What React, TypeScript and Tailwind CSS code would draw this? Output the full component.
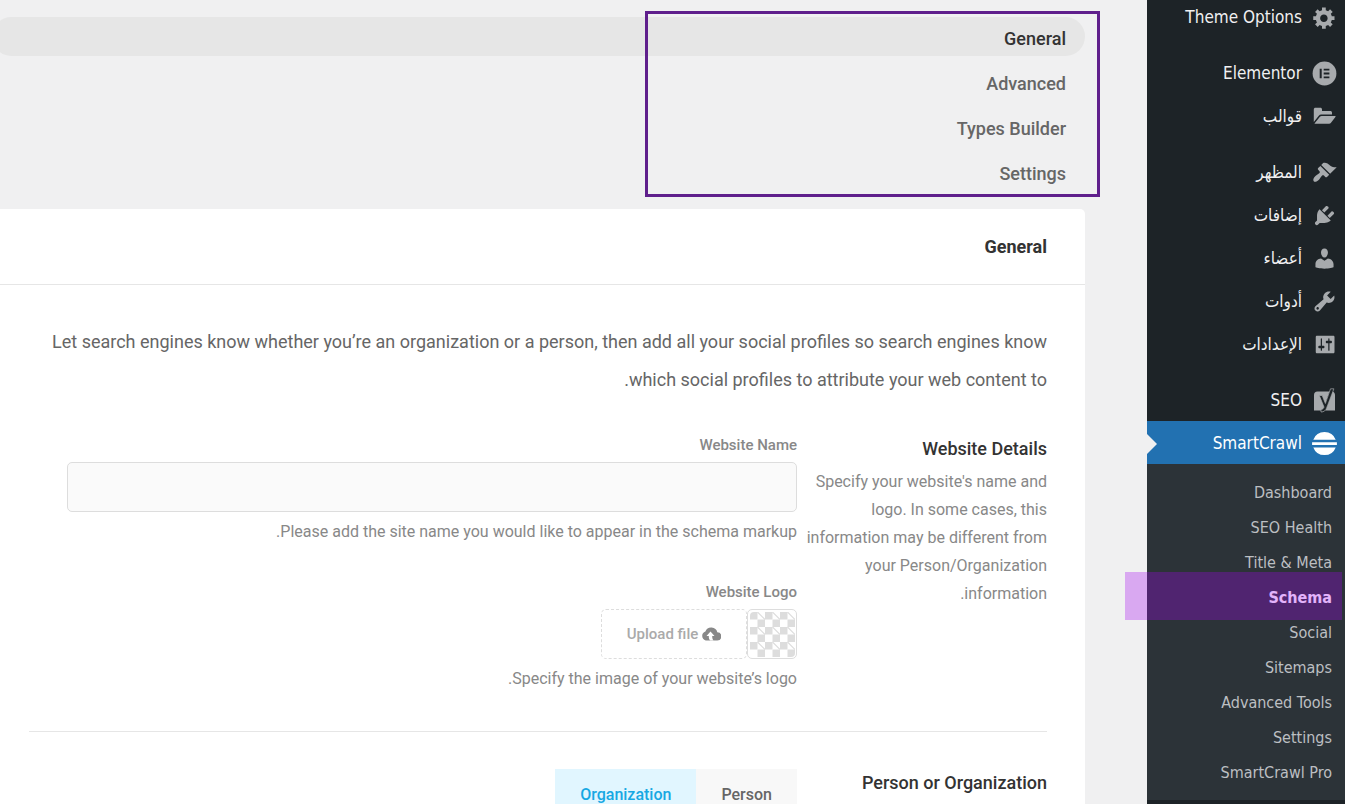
import { useState } from "react";
import type { ReactNode } from "react";

interface DashIconProps {
  d: string;
}

function DashIcon({ d }: DashIconProps) {
  return (
    <svg className="h-[25px] w-[25px]" viewBox="0 0 20 20" fill="currentColor" aria-hidden="true">
      <path d={d} />
    </svg>
  );
}

function ElementorIcon() {
  return (
    <svg className="h-[25px] w-[25px]" viewBox="0 0 25 25" aria-hidden="true">
      <circle cx="12.500" cy="12.500" r="11.900" fill="currentColor" />
      <path d="M7.700 7.700h2v9.600h-2zM11.700 7.700h5.700v1.900h-5.700zM11.700 11.500h5.700v1.900h-5.700zM11.700 15.400h5.700v1.900h-5.700z" fill="#1d2327" />
    </svg>
  );
}

function FolderIcon() {
  return (
    <svg className="h-[25px] w-[25px]" viewBox="0 0 25 25" fill="currentColor" aria-hidden="true">
      <path d="M1.800 18V5.400c0-1 .7-1.700 1.700-1.700h4.800c1 0 1.700.7 1.700 1.700v1.700h8.300c1 0 1.700.7 1.700 1.700v1.800H9.200c-1 0-1.800.4-2.400 1.100z" />
      <path d="M2.500 19.600l5.400-6.800c.5-.6 1-.9 1.800-.9h13.200c.6 0 .9.5.5 1l-4.600 6.100c-.4.5-1 .8-1.700.8H3.200c-.3 0-.5 0-.7-.2z" />
    </svg>
  );
}

function YoastIcon() {
  return (
    <svg className="h-[25px] w-[25px]" viewBox="0 0 25 25" aria-hidden="true">
      <path d="M5.500 3.500h12L11 22.500H2V7a3.500 3.500 0 0 1 3.500-3.500zM20.500 3.500c1.500.6 2.500 1.900 2.500 3.500v15.500h-9.500z" fill="currentColor" />
      <path d="M18.500.8h3.400L14.600 20c-1 2.600-2.500 4-5.600 4v-2.500c1.700-.2 2.600-1 3-2.400L7.300 7.500h2.900l3.200 8z" fill="#1d2327" stroke="currentColor" strokeWidth=".7" />
    </svg>
  );
}

function SmartCrawlIcon() {
  return (
    <svg className="h-[25px] w-[25px]" viewBox="0 0 25 25" fill="currentColor" aria-hidden="true">
      <path d="M1.300 8.800a12 12 0 0 1 22.400 0zM.1 11.300h24.800v2.600H.1zM1.300 16.400h22.400a12 12 0 0 1-22.400 0z" />
    </svg>
  );
}

function CloudUploadIcon() {
  return (
    <svg className="h-[14px] w-[20px] text-[#888]" viewBox="0 0 20 14" aria-hidden="true">
      <path d="M16.300 5.300A6.200 6.200 0 0 0 4.400 4.500 4.700 4.700 0 0 0 4.700 13.500H16a4.100 4.100 0 0 0 .3-8.200z" fill="currentColor" />
      <path d="M9.500 4.500l4 4.500h-2.300c0 2 .5 3.500 1.300 4.500H9.300C8.200 12.500 7.700 11 7.800 9H5.500z" fill="#fff" />
    </svg>
  );
}

interface MenuItem {
  label: string;
  icon: ReactNode;
  separated?: boolean;
  current?: boolean;
}

const menuItems: MenuItem[] = [
  {
    label: "Theme Options",
    icon: <DashIcon d="M18 12h-2.180c-.17.7-.44 1.350-.81 1.930l1.540 1.540-2.100 2.100-1.540-1.540c-.58.36-1.230.63-1.910.79V19H8v-2.180c-.68-.16-1.330-.43-1.910-.79l-1.540 1.540-2.120-2.120 1.540-1.540c-.36-.58-.63-1.230-.79-1.910H1V9.030h2.170c.16-.7.44-1.350.8-1.940L2.430 5.550l2.100-2.100 1.540 1.540c.58-.37 1.240-.64 1.930-.81V2h3v2.180c.68.16 1.330.43 1.910.79l1.540-1.540 2.120 2.120-1.540 1.540c.36.59.64 1.240.8 1.940H18V12zm-8.500 1.500c1.660 0 3-1.340 3-3s-1.340-3-3-3-3 1.340-3 3 1.340 3 3 3z" />,
  },
  { label: "Elementor", icon: <ElementorIcon />, separated: true },
  { label: "قوالب", icon: <FolderIcon /> },
  {
    label: "المظهر",
    icon: <DashIcon d="M14.480 11.060L7.410 3.990l1.500-1.500c.5-.56 2.300-.47 3.510.32 1.210.8 1.430 1.280 2.910 2.100 1.180.64 2.450 1.260 4.450.85zm-.71.71L6.700 4.700 4.930 6.470c-.39.39-.39 1.020 0 1.410l1.060 1.060c.39.39.39 1.030 0 1.420-.6.6-1.430 1.110-2.210 1.690-.35.26-.7.53-1.010.84C1.430 14.230.4 16.080 1.400 17.070c.99 1 2.840-.03 4.180-1.360.31-.31.58-.66.85-1.020.57-.78 1.080-1.610 1.690-2.210.39-.39 1.020-.39 1.410 0l1.060 1.060c.39.39 1.020.39 1.410 0z" />,
    separated: true,
  },
  {
    label: "إضافات",
    icon: <DashIcon d="M13.110 4.360L9.870 7.600 8 5.730l3.240-3.240c.35-.34 1.050-.2 1.560.32.52.51.66 1.210.31 1.550zm-8 1.770l.91-1.120 9.010 9.010-1.190.84c-.71.71-2.630 1.160-3.820 1.160H6.140L4.900 17.260c-.59.59-1.540.59-2.120 0-.59-.58-.59-1.530 0-2.120l1.240-1.240v-3.880c0-1.130.4-3.190 1.090-3.890zm7.260 3.970l3.240-3.240c.34-.35 1.040-.21 1.550.31.52.51.66 1.210.31 1.550l-3.240 3.250z" />,
  },
  {
    label: "أعضاء",
    icon: <DashIcon d="M10 9.250c-2.270 0-2.730-3.440-2.730-3.440C7 4.020 7.820 2 9.970 2c2.160 0 2.980 2.020 2.710 3.810 0 0-.41 3.440-2.680 3.440zm0 2.570L12.720 10c2.390 0 4.520 2.330 4.520 4.530v2.490s-3.650 1.130-7.240 1.130c-3.650 0-7.240-1.130-7.240-1.130v-2.490c0-2.250 1.940-4.480 4.470-4.480z" />,
  },
  {
    label: "أدوات",
    icon: <DashIcon d="M16.680 9.770c-1.340 1.340-3.300 1.670-4.950.99l-5.410 6.520c-.99.99-2.590.99-3.580 0s-.99-2.590 0-3.570l6.520-5.420c-.68-1.650-.35-3.610.99-4.950 1.280-1.280 3.120-1.620 4.720-1.060l-2.890 2.890 2.820 2.820 2.860-2.870c.53 1.580.18 3.390-1.080 4.650zM3.810 16.210c.4.39 1.040.39 1.430 0 .4-.4.4-1.040 0-1.430-.39-.4-1.030-.4-1.430 0-.39.39-.39 1.030 0 1.430z" />,
  },
  {
    label: "الإعدادات",
    icon: <DashIcon d="M18 16V4c0-.55-.45-1-1-1H4c-.55 0-1 .45-1 1v12c0 .55.45 1 1 1h13c.55 0 1-.45 1-1zM8 11h1c.55 0 1 .45 1 1s-.45 1-1 1H8v1.500c0 .28-.22.5-.5.5s-.5-.22-.5-.5V13H6c-.55 0-1-.45-1-1s.45-1 1-1h1V5.500c0-.28.22-.5.5-.5s.5.22.5.5V11zm5-2h-1c-.55 0-1-.45-1-1s.45-1 1-1h1V5.500c0-.28.22-.5.5-.5s.5.22.5.5V7h1c.55 0 1 .45 1 1s-.45 1-1 1h-1v5.500c0 .28-.22.5-.5.5s-.5-.22-.5-.5V9z" />,
  },
  { label: "SEO", icon: <YoastIcon />, separated: true },
  { label: "SmartCrawl", icon: <SmartCrawlIcon />, current: true },
];

const subItems = ["Dashboard", "SEO Health", "Title & Meta", "Schema", "Social", "Sitemaps", "Advanced Tools", "Settings", "SmartCrawl Pro"];

function Sidebar() {
  return (
    <nav className="w-[198px] shrink-0 bg-[#1d2327] font-['DejaVu_Sans_Condensed','DejaVu_Sans',sans-serif]" aria-label="Admin menu">
      <ul className="-mt-[5px]">
        {menuItems.map((item) => (
          <li key={item.label} className={item.separated ? "mt-[13px]" : ""}>
            <a
              href="#"
              className={`relative flex h-[43px] items-center gap-2.5 pt-0.5 pr-2 text-[17px] ${item.current ? "bg-[#2271b1] text-white" : "text-[#f0f0f1]"}`}
            >
              <span className={`flex w-[25px] justify-center ${item.current ? "text-white" : "text-[#a7aaad]"}`}>{item.icon}</span>
              {item.label}
              {item.current && (
                <span className="absolute left-0 border-y-[10px] border-l-[10px] border-y-transparent border-l-[#f0f0f1]" />
              )}
            </a>
          </li>
        ))}
      </ul>
      <ul className="bg-[#2c3338] pt-[11px] pb-2.5">
        {subItems.map((label) => (
          <li key={label} className="relative">
            <a
              href="#"
              className={`flex h-[35px] items-center pr-[13px] text-base ${label === "Schema" ? "font-bold text-white" : "text-[#bcbfc2]"}`}
            >
              {label}
            </a>
            {label === "Schema" && (
              <span className="pointer-events-none absolute -top-2 right-[3px] -left-[22px] h-12 bg-[#a400f3]/30" />
            )}
          </li>
        ))}
      </ul>
    </nav>
  );
}

const tabs = ["General", "Advanced", "Types Builder", "Settings"];

function Tabs() {
  const [active, setActive] = useState("General");

  return (
    <nav className="relative pt-[17px]" aria-label="Schema sections">
      <ul className="-ml-2 flex flex-col gap-1.5">
        {tabs.map((tab) => (
          <li key={tab}>
            <button
              type="button"
              onClick={() => setActive(tab)}
              className={`flex h-[39px] w-full items-center rounded-full pt-[3px] pr-[19px] text-[18px] font-medium ${tab === active ? "bg-[#e6e6e6] text-[#333]" : "text-[#666]"}`}
            >
              {tab}
            </button>
          </li>
        ))}
      </ul>
      <span className="pointer-events-none absolute top-[11px] -right-[15px] h-[186px] w-[455px] border-3 border-[#5f1f8c]" />
    </nav>
  );
}

// Checkerboard shown while no logo is selected
function LogoPreview() {
  const cells = Array.from({ length: 36 }, (_, i) => ({ col: i % 6, row: Math.floor(i / 6) }));

  return (
    <div className="flex h-[50px] w-[50px] items-center justify-center rounded-[5px] border border-[#ddd]">
      <svg className="h-[45px] w-[45px] rounded-sm" viewBox="0 0 12 12" aria-hidden="true">
        {cells.map(({ col, row }) =>
          (col + row) % 2 === 0 ? (
            <rect key={`${col}-${row}`} x={col * 2} y={row * 2} width="2" height="2" fill="#ddd" />
          ) : row % 2 === 0 ? (
            <path key={`${col}-${row}`} d={`M${col * 2} ${row * 2}l2 2`} stroke="#ddd" strokeWidth=".3" />
          ) : null
        )}
      </svg>
    </div>
  );
}

interface SettingsRowProps {
  title: string;
  description?: string;
  children: ReactNode;
}

function SettingsRow({ title, description, children }: SettingsRowProps) {
  return (
    <section className="flex pl-[38px]">
      <div className="w-[250px] shrink-0 pl-2">
        <h3 className="text-[18px] leading-7 font-medium text-[#333]">{title}</h3>
        {description && <p className="mt-[5px] text-base leading-7 text-[#888]">{description}</p>}
      </div>
      <div className="min-w-0 flex-1">{children}</div>
    </section>
  );
}

function App() {
  const [kind, setKind] = useState("Organization");

  return (
    <div dir="rtl" className="flex h-screen overflow-hidden bg-[#f0f0f1] font-[Roboto,'Noto_Sans',sans-serif]">
      <Sidebar />
      <main className="mr-[62px] min-w-0 flex-1">
        <Tabs />

        <div className="mt-[18px] rounded-tr-[5px] bg-white">
          <header className="flex h-[76px] items-center border-b border-[#e6e6e6] pr-[38px]">
            <h2 className="text-[18px] font-bold text-[#333]">General</h2>
          </header>

          <div className="pt-[38px] pr-[38px] pb-[38px] pl-[29px]">
            <p className="text-[18px] leading-[38px] text-[#666]">
              Let search engines know whether you’re an organization or a person, then add all your social profiles so search engines know which social profiles to attribute your web content to.
            </p>

            <div className="mt-9 border-b border-[#e6e6e6] pb-[42px]">
              <SettingsRow
                title="Website Details"
                description="Specify your website's name and logo. In some cases, this information may be different from your Person/Organization information."
              >
                <label htmlFor="site-name" className="block text-[15px] leading-5 font-medium text-[#888]">Website Name</label>
                <input id="site-name" type="text" className="mt-[7px] block h-[50px] w-full rounded-[5px] border border-[#ddd] bg-[#fafafa] px-4 text-base text-[#333]" />
                <p className="mt-2.5 text-base leading-5 text-[#888]">Please add the site name you would like to appear in the schema markup.</p>

                <h4 className="mt-10 text-[15px] leading-5 font-medium text-[#888]">Website Logo</h4>
                <div className="mt-[7px] flex">
                  <LogoPreview />
                  <button type="button" className="flex h-[50px] w-[146px] items-center justify-center gap-[3px] rounded-[5px] border border-dashed border-[#ddd] text-[15px] font-medium text-[#aaa]">
                    <CloudUploadIcon />
                    Upload file
                  </button>
                </div>
                <p className="mt-2.5 text-base leading-5 text-[#888]">Specify the image of your website’s logo.</p>
              </SettingsRow>
            </div>

            <div className="mt-[37px]">
              <SettingsRow title="Person or Organization">
                <div className="flex" role="radiogroup" aria-label="Person or Organization">
                  {["Person", "Organization"].map((option) => (
                    <label
                      key={option}
                      className={`flex h-[50px] cursor-pointer items-center px-[25px] pt-0.5 text-base font-medium ${kind === option ? "bg-[#e1f6ff] text-[#17a8e3]" : "bg-[#f8f8f8] text-[#666]"}`}
                    >
                      <input type="radio" name="kind" value={option} checked={kind === option} onChange={() => setKind(option)} className="sr-only" />
                      {option}
                    </label>
                  ))}
                </div>
              </SettingsRow>
            </div>
          </div>
        </div>
      </main>
    </div>
  );
}

export default App;
